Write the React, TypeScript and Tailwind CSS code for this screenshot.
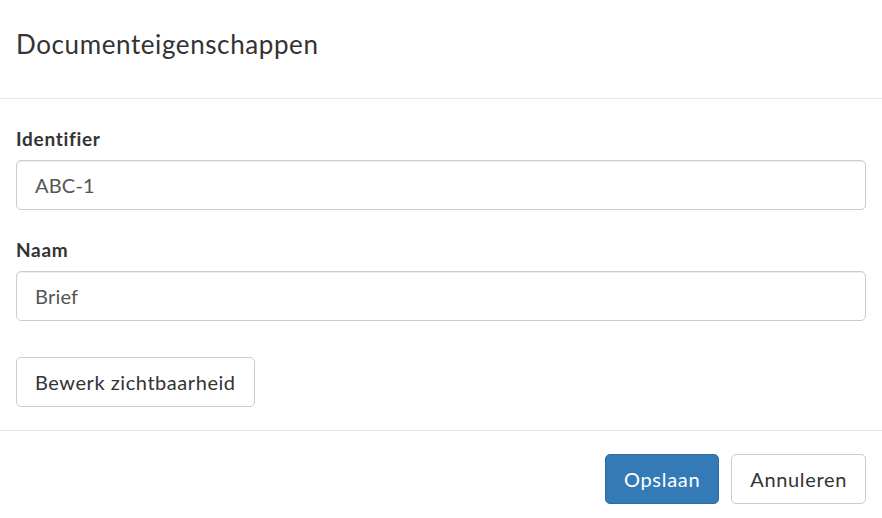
import { useState } from "react";

const Field = ({ label, value }: { label: string; value: string }) => {
    const [val, setVal] = useState(value);
    return (
        <div className="mb-[27px]">
            <label className="block font-bold text-[19px] leading-[26px] tracking-[0.7px] text-[#333] mb-[8px]">{label}</label>
            <input
                value={val}
                onChange={(e) => setVal(e.target.value)}
                className="block w-full h-[50px] px-[18px] text-[20px] tracking-[0.2px] text-[#555] bg-white border border-[#ccc] rounded-[5px] shadow-[inset_0_1px_1px_rgba(0,0,0,0.075)] outline-none"
            />
        </div>
    );
};

export default function App() {
    return (
        <div className="w-[882px] h-[518px] bg-white font-['Lato','Open_Sans',sans-serif] text-[#333] overflow-hidden">
            {/* Header */}
            <div className="h-[99px] px-[16px] pt-[26px] border-b border-[#e5e5e5]">
                <h4 className="text-[26px] leading-[36px] tracking-[0.6px] text-[#333]">Documenteigenschappen</h4>
            </div>

            {/* Body */}
            <div className="px-[16px] pt-[27px] pb-[23px] border-b border-[#e5e5e5]">
                <Field label="Identifier" value="ABC-1" />
                <Field label="Naam" value="Brief" />
                <div className="pt-[9px]">
                    <button className="h-[50px] px-[18px] text-[20px] tracking-[0.55px] text-[#333] bg-white border border-[#ccc] rounded-[5px]">
                        Bewerk zichtbaarheid
                    </button>
                </div>
            </div>

            {/* Footer */}
            <div className="flex justify-end gap-[12px] px-[16px] pt-[23px]">
                <button className="h-[50px] px-[18px] text-[20px] tracking-[0.7px] text-white bg-[#337ab7] border border-[#2e6da4] rounded-[5px]">
                    Opslaan
                </button>
                <button className="h-[50px] px-[18px] text-[20px] tracking-[0.65px] text-[#333] bg-white border border-[#ccc] rounded-[5px]">
                    Annuleren
                </button>
            </div>
        </div>
    );
}
